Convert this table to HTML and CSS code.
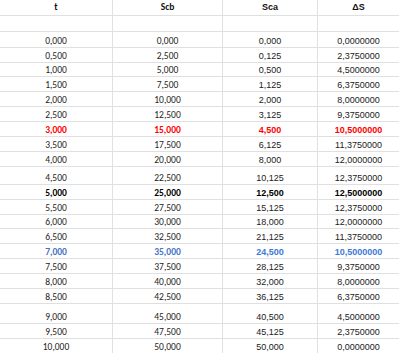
FILE: index.html
```html
<!DOCTYPE html>
<html>
<head>
<meta charset="utf-8">
<link rel="stylesheet" href="styles.css">
</head>
<body>
<div class="sheet">
  <div class="row h16 head"><div class="c l">t</div><div class="c l">Scb</div><div class="c r">Sca</div><div class="c r">ΔS</div></div>
  <div class="row h16"><div class="c l"></div><div class="c l"></div><div class="c r"></div><div class="c r"></div></div>
  <div class="row h16"><div class="c l">0,000</div><div class="c l">0,000</div><div class="c r">0,000</div><div class="c r">0,0000000</div></div>
  <div class="row"><div class="c l">0,500</div><div class="c l">2,500</div><div class="c r">0,125</div><div class="c r">2,3750000</div></div>
  <div class="row h14"><div class="c l">1,000</div><div class="c l">5,000</div><div class="c r">0,500</div><div class="c r">4,5000000</div></div>
  <div class="row"><div class="c l">1,500</div><div class="c l">7,500</div><div class="c r">1,125</div><div class="c r">6,3750000</div></div>
  <div class="row"><div class="c l">2,000</div><div class="c l">10,000</div><div class="c r">2,000</div><div class="c r">8,0000000</div></div>
  <div class="row"><div class="c l">2,500</div><div class="c l">12,500</div><div class="c r">3,125</div><div class="c r">9,3750000</div></div>
  <div class="row red"><div class="c l">3,000</div><div class="c l">15,000</div><div class="c r">4,500</div><div class="c r">10,5000000</div></div>
  <div class="row"><div class="c l">3,500</div><div class="c l">17,500</div><div class="c r">6,125</div><div class="c r">11,3750000</div></div>
  <div class="row"><div class="c l">4,000</div><div class="c l">20,000</div><div class="c r">8,000</div><div class="c r">12,0000000</div></div>
  <div class="row h18"><div class="c l">4,500</div><div class="c l">22,500</div><div class="c r">10,125</div><div class="c r">12,3750000</div></div>
  <div class="row bold"><div class="c l">5,000</div><div class="c l">25,000</div><div class="c r">12,500</div><div class="c r">12,5000000</div></div>
  <div class="row"><div class="c l">5,500</div><div class="c l">27,500</div><div class="c r">15,125</div><div class="c r">12,3750000</div></div>
  <div class="row h14"><div class="c l">6,000</div><div class="c l">30,000</div><div class="c r">18,000</div><div class="c r">12,0000000</div></div>
  <div class="row"><div class="c l">6,500</div><div class="c l">32,500</div><div class="c r">21,125</div><div class="c r">11,3750000</div></div>
  <div class="row blue"><div class="c l">7,000</div><div class="c l">35,000</div><div class="c r">24,500</div><div class="c r">10,5000000</div></div>
  <div class="row"><div class="c l">7,500</div><div class="c l">37,500</div><div class="c r">28,125</div><div class="c r">9,3750000</div></div>
  <div class="row"><div class="c l">8,000</div><div class="c l">40,000</div><div class="c r">32,000</div><div class="c r">8,0000000</div></div>
  <div class="row"><div class="c l">8,500</div><div class="c l">42,500</div><div class="c r">36,125</div><div class="c r">6,3750000</div></div>
  <div class="row h20"><div class="c l">9,000</div><div class="c l">45,000</div><div class="c r">40,500</div><div class="c r">4,5000000</div></div>
  <div class="row"><div class="c l">9,500</div><div class="c l">47,500</div><div class="c r">45,125</div><div class="c r">2,3750000</div></div>
  <div class="row"><div class="c l">10,000</div><div class="c l">50,000</div><div class="c r">50,000</div><div class="c r">0,0000000</div></div>
</div>
</body>
</html>
```
FILE: styles.css
```css
html, body {
  margin: 0;
  padding: 0;
  background: #ffffff;
}
.sheet {
  width: 399px;
  display: flex;
  flex-direction: column;
}
.row {
  box-sizing: border-box;
  height: 15px;
  display: grid;
  grid-template-columns: 113px 110px 95px 81px;
  border-bottom: 1px solid #e0e0e0;
}
.row.h14 { height: 14px; }
.row.h16 { height: 16px; }
.row.h18 { height: 18px; }
.row.h20 { height: 20px; }
.c {
  box-sizing: border-box;
  display: flex;
  align-items: flex-end;
  justify-content: center;
  border-right: 1px solid #e0e0e0;
  line-height: 9px;
  padding-bottom: 1px;
  color: #222222;
  white-space: nowrap;
}
.c:last-child { border-right: none; }
.c.l {
  font-family: "Carlito", "Lato", "Liberation Sans", sans-serif;
  font-size: 9.5px;
  color: #1c1c1c;
}
.c.r {
  font-family: "Liberation Sans", Arial, sans-serif;
  font-size: 9px;
}
.head .c {
  font-weight: bold;
  padding-bottom: 3px;
  color: #111111;
}
.bold .c { font-weight: bold; color: #000000; }
.red .c { font-weight: bold; color: #ff0000; }
.blue .c.l { font-weight: bold; color: #4472c4; }
.blue .c.r { font-weight: bold; color: #3c78d8; }
```
